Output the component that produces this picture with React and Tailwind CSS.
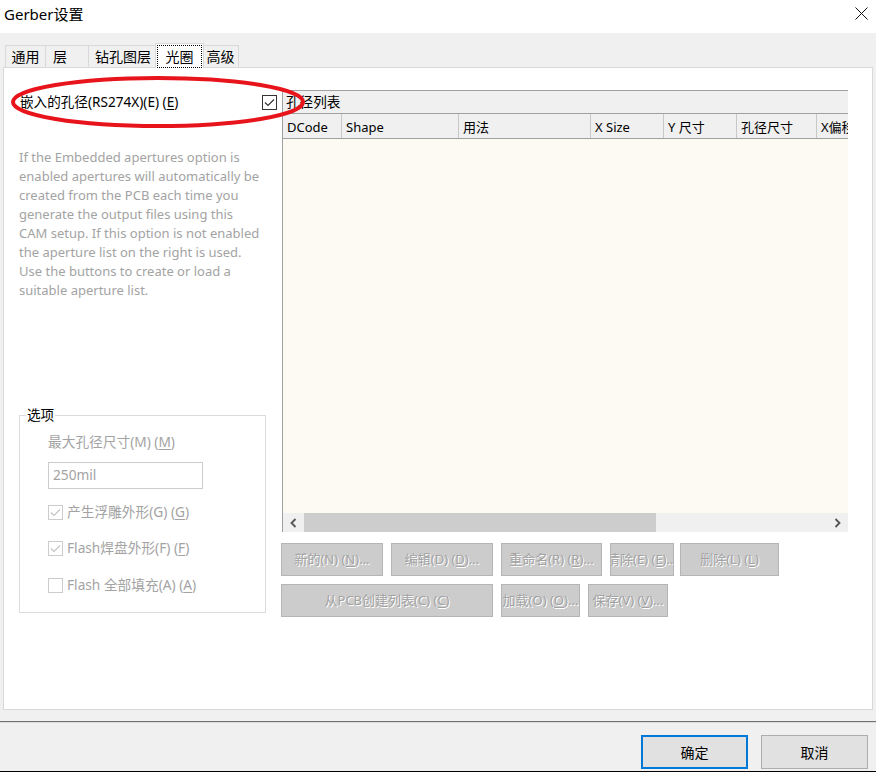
const FONT = "font-['Noto_Sans','Noto_Sans_CJK_SC',sans-serif]";

function Key({ pre, k, post }) {
  return (
    <>
      {pre}(<span className="underline underline-offset-2">{k}</span>){post}
    </>
  );
}

function Check({ checked, disabled }) {
  const c = disabled ? "#c4c4c4" : "#333333";
  return (
    <span
      className={`w-[15px] h-[15px] border bg-white flex items-center justify-center shrink-0 ${
        disabled ? "border-[#cccccc]" : "border-[#333333]"
      }`}
    >
      {checked && (
        <svg width="11" height="9" viewBox="0 0 11 9">
          <polyline points="1,4.5 4,7.5 10,1.5" fill="none" stroke={c} strokeWidth="1.2" />
        </svg>
      )}
    </span>
  );
}

function Btn({ w, children }) {
  return (
    <div
      className={`${w} h-[33px] shrink-0 bg-[#cccccc] border border-[#b5b5b5] flex items-center justify-center overflow-hidden whitespace-nowrap text-[13px] text-[#a2a2a2] [text-shadow:1px_1px_0_#ffffff]`}
    >
      {children}
    </div>
  );
}

const descLines = [
  "If the Embedded apertures option is",
  "enabled apertures will automatically be",
  "created from the PCB each time you",
  "generate the output files using this",
  "CAM setup. If this option is not enabled",
  "the aperture list on the right is used.",
  "Use the buttons to create or load a",
  "suitable aperture list.",
];

const cols = [
  { w: "w-[58px]", t: "DCode" },
  { w: "w-[117px]", t: "Shape" },
  { w: "w-[132px]", t: "用法" },
  { w: "w-[73px]", t: "X Size" },
  { w: "w-[73px]", t: "Y 尺寸" },
  { w: "w-[80px]", t: "孔径尺寸" },
  { w: "w-[60px]", t: "X偏移" },
];

export default function App() {
  return (
    <div className={`${FONT} relative w-[876px] h-[772px] overflow-hidden bg-[#f0f0f0] text-black`}>
      {/* title bar */}
      <div className="h-[33px] bg-white flex items-center justify-between pl-[4px] pr-[8px]">
        <span className="text-[15px] -mt-[4px]">Gerber设置</span>
        <svg width="13" height="13" viewBox="0 0 13 13" className="-mt-[6px]">
          <path d="M0.5 0.5L12.5 12.5M12.5 0.5L0.5 12.5" stroke="#111" strokeWidth="1" />
        </svg>
      </div>

      {/* tabs */}
      <div className="h-[34px] flex items-end pl-[5px] text-[14px]">
        <div className="w-[40px] h-[22px] border-t border-l border-[#d9d9d9] flex items-center justify-center">通用</div>
        <div className="w-[43px] h-[22px] border-t border-l border-[#d9d9d9] flex items-center pl-[7px]">层</div>
        <div className="w-[69px] h-[22px] border-t border-l border-[#d9d9d9] flex items-center justify-center">钻孔图层</div>
        <div className="relative z-10 -mx-[2px] w-[49px] h-[25px] -mb-[1px] bg-white border-t border-l border-r border-[#d9d9d9] flex items-center justify-center">
          <span className="absolute left-[1px] right-[1px] top-[1px] bottom-[0px] border border-dotted border-black" />
          光圈
        </div>
        <div className="w-[37px] h-[22px] border-t border-l border-r border-[#d9d9d9] flex items-center justify-center">高级</div>
      </div>

      {/* tab panel */}
      <div className="mx-[3px] h-[643px] border border-[#d9d9d9] bg-white flex">
        {/* left */}
        <div className="w-[278px] shrink-0 pt-[26px]">
          <div className="h-[16px] flex items-center justify-between pl-[16px] pr-[5px] text-[13.6px]">
            <span>
              <Key pre="嵌入的孔径(RS274X)(E) " k="E" />
            </span>
            <Check checked />
          </div>

          <div className="mt-[38px] h-[171px] pl-[15px] text-[13px] leading-[19px] text-[#a3a3a3]">
            {descLines.map((l) => (
              <div key={l} className="whitespace-nowrap">{l}</div>
            ))}
          </div>

          <div className="relative mt-[96px] ml-[15px] w-[247px] h-[198px] border border-[#dcdcdc]">
            <span className="absolute left-[6px] -top-[10px] bg-white px-[1px] text-[13.6px] leading-[18px]">选项</span>
            <div className="pl-[28px] pt-[17px] text-[13.7px] text-[#a3a3a3]">
              <div className="h-[18px] leading-[18px]">
                <Key pre="最大孔径尺寸(M) " k="M" />
              </div>
              <div className="mt-[11px] w-[155px] h-[27px] border border-[#cccccc] flex items-center pl-[4px]">250mil</div>
              <div className="mt-[16px] h-[15px] flex items-center gap-[4px]">
                <Check checked disabled />
                <span>
                  <Key pre="产生浮雕外形(G) " k="G" />
                </span>
              </div>
              <div className="mt-[21px] h-[15px] flex items-center gap-[4px]">
                <Check checked disabled />
                <span>
                  <Key pre="Flash焊盘外形(F) " k="F" />
                </span>
              </div>
              <div className="mt-[22px] h-[15px] flex items-center gap-[4px]">
                <Check disabled />
                <span>
                  <Key pre="Flash 全部填充(A) " k="A" />
                </span>
              </div>
            </div>
          </div>
        </div>

        {/* right */}
        <div className="w-[566px] shrink-0 pt-[22px]">
          <div className="h-[442px] border-l border-t border-[#a0a0a0] flex flex-col text-[13px]">
            <div className="h-[23px] bg-[#f0f0f0] border-b border-[#a0a0a0] flex items-center pl-[3px] pt-[1px] text-[13.6px]">孔径列表</div>
            <div className="h-[25px] bg-[#f0f0f0] border-b border-[#a0a0a0] flex overflow-hidden">
              {cols.map((c, i) => (
                <div
                  key={c.t}
                  className={`${c.w} shrink-0 h-full flex items-center pl-[4px] pt-[3px] whitespace-nowrap ${
                    i > 0 ? "border-l border-[#c8c8c8]" : ""
                  }`}
                >
                  {c.t}
                </div>
              ))}
            </div>
            <div className="flex-1 bg-[#fdf9f3]" />
            <div className="h-[19px] bg-[#f0f0f0] flex items-center">
              <div className="w-[21px] flex justify-center">
                <svg width="7" height="10" viewBox="0 0 7 10">
                  <polyline points="5.5,1 1.5,5 5.5,9" fill="none" stroke="#555" strokeWidth="1.8" />
                </svg>
              </div>
              <div className="w-[352px] h-full bg-[#cdcdcd]" />
              <div className="flex-1" />
              <div className="w-[21px] flex justify-center">
                <svg width="7" height="10" viewBox="0 0 7 10">
                  <polyline points="1.5,1 5.5,5 1.5,9" fill="none" stroke="#555" strokeWidth="1.8" />
                </svg>
              </div>
            </div>
          </div>

          <div className="mt-[11px] -ml-[1px] flex">
            <Btn w="w-[102px]"><Key pre="新的(N) " k="N" post="..." /></Btn>
            <div className="w-[8px]" />
            <Btn w="w-[102px]"><Key pre="编辑(D) " k="D" post="..." /></Btn>
            <div className="w-[8px]" />
            <Btn w="w-[101px]"><Key pre="重命名(R) " k="R" post="..." /></Btn>
            <div className="w-[8px]" />
            <Btn w="w-[64px]"><Key pre="清除(E) " k="E" post="..." /></Btn>
            <div className="w-[6px]" />
            <Btn w="w-[99px]"><Key pre="删除(L) " k="L" /></Btn>
          </div>
          <div className="mt-[8px] -ml-[1px] flex">
            <Btn w="w-[212px]"><Key pre="从PCB创建列表(C) " k="C" /></Btn>
            <div className="w-[8px]" />
            <Btn w="w-[79px]"><Key pre="加载(O) " k="O" post="..." /></Btn>
            <div className="w-[8px]" />
            <Btn w="w-[80px]"><Key pre="保存(V) " k="V" post="..." /></Btn>
          </div>
        </div>
      </div>

      {/* separator */}
      <div className="mt-[11px] h-[1px] bg-[#707070]" />
      <div className="h-[1px] bg-[#dcdcdc]" />

      {/* dialog buttons */}
      <div className="mt-[12px] flex justify-end pr-[8px] gap-[13px] text-[14px]">
        <div className="w-[107px] h-[34px] bg-[#e1e1e1] border-2 border-[#0078d7] flex items-center justify-center">确定</div>
        <div className="w-[107px] h-[34px] bg-[#e1e1e1] border border-[#adadad] flex items-center justify-center">取消</div>
      </div>
      <div className="absolute left-0 right-0 bottom-0 h-[1px] bg-black" />

      {/* red annotation ellipse */}
      <svg className="absolute left-0 top-0 pointer-events-none" width="876" height="772">
        <ellipse cx="158" cy="102" rx="145" ry="24" fill="none" stroke="#e8141c" strokeWidth="4" />
      </svg>
    </div>
  );
}
